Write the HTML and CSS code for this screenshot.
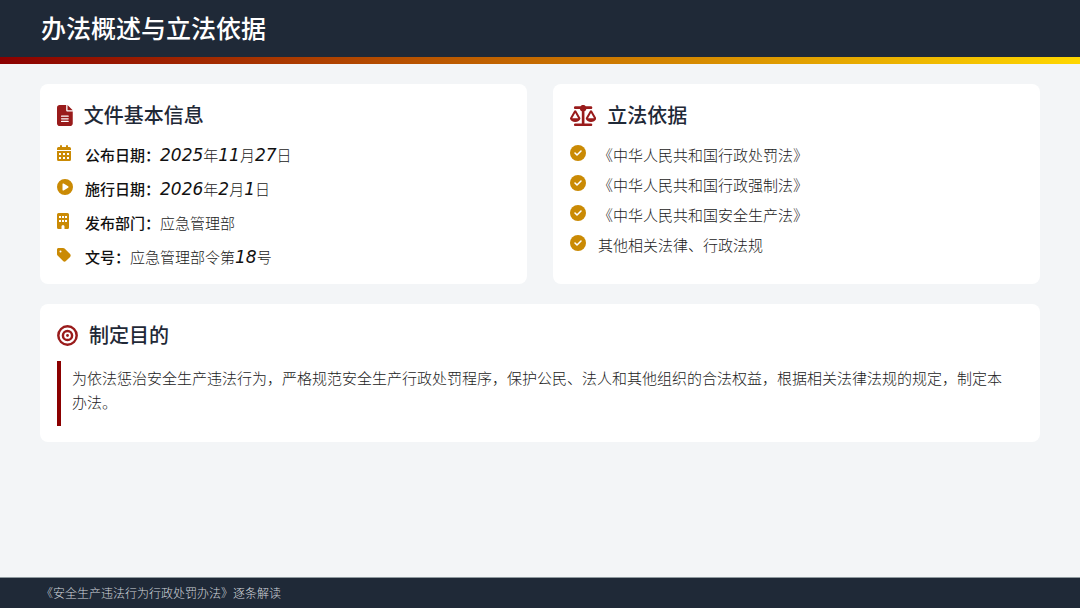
FILE: index.html
```html
<!DOCTYPE html>
<html lang="zh-CN">
<head>
  <meta charset="UTF-8">
  <meta name="viewport" content="width=device-width, initial-scale=1.0">
  <title>办法概述与立法依据</title>
  <link rel="stylesheet" href="styles.css">
</head>
<body>

  <header class="header">
    <h1>办法概述与立法依据</h1>
  </header>

  <main class="content">
    <section class="card">
      <h2 class="card-title">
        <svg class="title-icon" viewBox="0 0 384 512"><path fill-rule="evenodd" d="M64 0C28.700 0 0 28.700 0 64V448c0 35.300 28.700 64 64 64H320c35.300 0 64-28.700 64-64V160H256c-17.700 0-32-14.300-32-32V0zM256 0V128H384zM112 256H272a16 16 0 0 1 0 32H112a16 16 0 0 1 0-32zm0 64H272a16 16 0 0 1 0 32H112a16 16 0 0 1 0-32zm0 64H272a16 16 0 0 1 0 32H112a16 16 0 0 1 0-32z"/></svg>
        文件基本信息
      </h2>
      <ul class="list info-list">
        <li>
          <span class="item-icon"><svg viewBox="0 0 448 512"><path fill-rule="evenodd" d="M128 0a32 32 0 0 1 32 32V64H288V32a32 32 0 0 1 64 0V64h48a48 48 0 0 1 48 48v48H0V112A48 48 0 0 1 48 64H96V32a32 32 0 0 1 32-32zM0 192H448V464a48 48 0 0 1-48 48H48a48 48 0 0 1-48-48zM64 256v64h64v-64zm128 0v64h64v-64zm128 0v64h64v-64zM64 384v64h64v-64zm128 0v64h64v-64zm128 0v64h64v-64z"/></svg></span>
          <span><strong>公布日期：</strong><span class="num">2025</span>年<span class="num">11</span>月<span class="num">27</span>日</span>
        </li>
        <li>
          <span class="item-icon"><svg viewBox="0 0 512 512"><path fill-rule="evenodd" d="M256 0a256 256 0 1 1 0 512a256 256 0 1 1 0-512zM188 147c-8 4-12 12-12 21v176c0 9 5 17 12 21s17 4 24 0l144-88c7-4 12-12 12-21s-5-17-12-21l-144-88c-7-4-16-4-24 0z"/></svg></span>
          <span><strong>施行日期：</strong><span class="num">2026</span>年<span class="num">2</span>月<span class="num">1</span>日</span>
        </li>
        <li>
          <span class="item-icon"><svg viewBox="0 0 384 512"><path fill-rule="evenodd" d="M48 0H336a48 48 0 0 1 48 48V464a48 48 0 0 1-48 48H240V432a48 48 0 0 0-96 0v80H48a48 48 0 0 1-48-48V48A48 48 0 0 1 48 0zM64 96v64h64V96zm96 0v64h64V96zm96 0v64h64V96zM64 224v64h64v-64zm96 0v64h64v-64zm96 0v64h64v-64z"/></svg></span>
          <span><strong>发布部门：</strong>应急管理部</span>
        </li>
        <li>
          <span class="item-icon"><svg viewBox="0 0 448 512"><path fill-rule="evenodd" d="M0 80V229c0 17 7 33 19 45l176 176c25 25 65 25 90 0L419 317c25-25 25-65 0-90l-176-176c-12-12-29-19-46-19H48C21 32 0 53 0 80zm112 32a32 32 0 1 1 0 64 32 32 0 1 1 0-64z"/></svg></span>
          <span><strong>文号：</strong>应急管理部令第<span class="num">18</span>号</span>
        </li>
      </ul>
    </section>

    <section class="card">
      <h2 class="card-title">
        <svg class="title-icon" viewBox="0 0 640 512"><path d="M384 32H512c17.700 0 32 14.300 32 32s-14.300 32-32 32H398.400c-5.200 25.800-22.900 47.100-46.400 57.300V448H512c17.700 0 32 14.300 32 32s-14.300 32-32 32H128c-17.700 0-32-14.300-32-32s14.300-32 32-32H288V153.300c-23.500-10.300-41.200-31.600-46.400-57.300H128c-17.700 0-32-14.300-32-32s14.300-32 32-32H256c14.600-19.400 37.800-32 64-32s49.400 12.600 64 32zm55.600 288H584.400L512 195.800 439.600 320zM512 416c-62.900 0-115.200-34-126-78.900c-2.600-11 1-22.300 6.700-32.100l95.200-163.200c5-8.600 14.200-13.800 24.100-13.800s19.100 5.300 24.100 13.800l95.200 163.200c5.700 9.800 9.300 21.100 6.700 32.100C627.200 382 574.900 416 512 416zM126.800 195.800L54.400 320H199.300L126.800 195.800zM.9 337.100c-2.600-11 1-22.300 6.700-32.100l95.200-163.200c5-8.600 14.200-13.800 24.100-13.800s19.100 5.300 24.100 13.800l95.200 163.200c5.700 9.800 9.300 21.100 6.700 32.100C242 382 189.700 416 126.800 416S11.700 382 .9 337.100z"/></svg>
        立法依据
      </h2>
      <ul class="list law-list">
        <li>
          <span class="item-icon"><svg viewBox="0 0 512 512"><path d="M256 0a256 256 0 1 1 0 512a256 256 0 1 1 0-512z"/><path class="tick" d="M160 256l64 64 128-128"/></svg></span>
          <span>《中华人民共和国行政处罚法》</span>
        </li>
        <li>
          <span class="item-icon"><svg viewBox="0 0 512 512"><path d="M256 0a256 256 0 1 1 0 512a256 256 0 1 1 0-512z"/><path class="tick" d="M160 256l64 64 128-128"/></svg></span>
          <span>《中华人民共和国行政强制法》</span>
        </li>
        <li>
          <span class="item-icon"><svg viewBox="0 0 512 512"><path d="M256 0a256 256 0 1 1 0 512a256 256 0 1 1 0-512z"/><path class="tick" d="M160 256l64 64 128-128"/></svg></span>
          <span>《中华人民共和国安全生产法》</span>
        </li>
        <li>
          <span class="item-icon"><svg viewBox="0 0 512 512"><path d="M256 0a256 256 0 1 1 0 512a256 256 0 1 1 0-512z"/><path class="tick" d="M160 256l64 64 128-128"/></svg></span>
          <span>其他相关法律、行政法规</span>
        </li>
      </ul>
    </section>

    <section class="card card-wide">
      <h2 class="card-title">
        <svg class="title-icon" viewBox="0 0 512 512"><g class="rings"><circle cx="256" cy="256" r="224"/><circle cx="256" cy="256" r="112"/></g><circle cx="256" cy="256" r="34"/></svg>
        制定目的
      </h2>
      <p class="purpose">为依法惩治安全生产违法行为，严格规范安全生产行政处罚程序，保护公民、法人和其他组织的合法权益，根据相关法律法规的规定，制定本办法。</p>
    </section>
  </main>

  <footer class="footer">《安全生产违法行为行政处罚办法》逐条解读</footer>

</body>
</html>
```

FILE: styles.css
```css
* {
  box-sizing: border-box;
  margin: 0;
  padding: 0;
}

body {
  display: flex;
  flex-direction: column;
  min-height: 100vh;
  background-color: #f3f5f7;
  color: #222;
  font-family: "Noto Sans CJK SC", sans-serif;
  font-size: 15px;
  font-weight: 300;
  line-height: 24px;
}

.header {
  padding: 9px 41px 0;
  background-color: #1f2937;
  color: #fff;
}

.header h1 {
  font-size: 25px;
  font-weight: 500;
  line-height: 37px;
}

/* red to gold strip under the header */
.header::after {
  content: "";
  display: block;
  height: 7px;
  margin: 11px -41px 0;
  background: linear-gradient(to right, #8b0000, #ffd700);
}

.content {
  flex: 1;
  display: grid;
  grid-template-columns: 1fr 1fr;
  align-content: start;
  gap: 20px 26px;
  padding: 20px 40px;
}

.card {
  padding: 17px 17px 15px;
  background-color: #fff;
  border-radius: 8px;
}

.card-wide {
  grid-column: 1 / -1;
  padding-bottom: 16px;
}

.card-title {
  display: flex;
  align-items: center;
  gap: 11px;
  margin-bottom: 12px;
  color: #1f2937;
  font-size: 20px;
  font-weight: 500;
  line-height: 28px;
}

.title-icon {
  height: 21px;
  fill: #991b1b;
}

.rings {
  fill: none;
  stroke: #991b1b;
  stroke-width: 60;
}

.list {
  display: flex;
  flex-direction: column;
  padding-top: 2px;
  list-style: none;
}

.list li {
  display: flex;
  align-items: flex-start;
  gap: 12px;
}

.info-list {
  gap: 10px;
}

.law-list {
  gap: 6px;
}

.item-icon {
  display: flex;
  width: 16px;
  padding-top: 2px;
}

.item-icon svg {
  height: 16px;
  fill: #ca8a04;
}

.item-icon .tick {
  fill: none;
  stroke: #fff;
  stroke-width: 50;
  stroke-linecap: round;
  stroke-linejoin: round;
}

strong {
  color: #111;
  font-weight: 500;
}

.num {
  color: #111;
  font-family: "DejaVu Sans", sans-serif;
  font-size: 17px;
  font-style: italic;
  font-weight: 400;
  line-height: 1;
}

.purpose {
  padding: 5px 14px 12px 11px;
  border-left: 4px solid #8b0000;
}

.footer {
  padding: 3px 41px;
  border-top: 1px solid #8f9a9f;
  background-color: #1f2937;
  color: #d1d5db;
  font-size: 12px;
}
```
